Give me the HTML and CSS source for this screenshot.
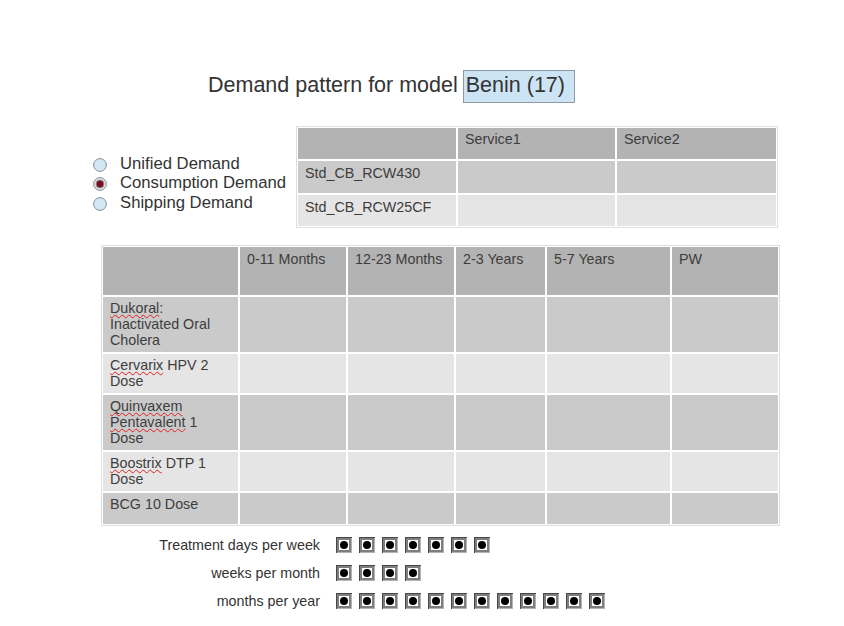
FILE: index.html
```html
<!DOCTYPE html>
<html>
<head>
<meta charset="utf-8">
<link rel="stylesheet" href="styles.css">
</head>
<body>
<svg class="defs" width="0" height="0">
  <defs>
    <symbol id="chk" viewBox="0 0 16 16">
      <rect x="0" y="0" width="16" height="16" fill="#474747"/>
      <rect x="1" y="1" width="15" height="15" fill="#b4b4b4"/>
      <rect x="1" y="1" width="14" height="14" fill="#7e7e7e"/>
      <rect x="3" y="3" width="10" height="10" fill="#ffffff"/>
      <circle cx="8" cy="8" r="4" fill="#000000"/>
    </symbol>
  </defs>
</svg>
<div class="page">
  <div class="title-row">
    <span class="title">Demand pattern for model</span>
    <span class="model-box">Benin (17)</span>
  </div>

  <div class="mid">
    <div class="radios">
      <label class="radio">
        <svg class="radio-ico" width="14" height="14" viewBox="0 0 14 14"><circle cx="7" cy="7" r="6.4" fill="#d4e7f5" stroke="#8c8c8c" stroke-width="1"/></svg>
        <span>Unified Demand</span>
      </label>
      <label class="radio">
        <svg class="radio-ico" width="14" height="14" viewBox="0 0 14 14"><circle cx="7" cy="7" r="6.4" fill="#dbe4ea" stroke="#8c8c8c" stroke-width="1"/><circle cx="7" cy="7" r="3.9" fill="#7d0b20" stroke="#8a8a8a" stroke-width="1"/></svg>
        <span>Consumption Demand</span>
      </label>
      <label class="radio">
        <svg class="radio-ico" width="14" height="14" viewBox="0 0 14 14"><circle cx="7" cy="7" r="6.4" fill="#d4e7f5" stroke="#8c8c8c" stroke-width="1"/></svg>
        <span>Shipping Demand</span>
      </label>
    </div>

    <table class="grid services">
      <tr class="head">
        <th class="c158"></th>
        <th class="c157">Service1</th>
        <th class="c159">Service2</th>
      </tr>
      <tr class="odd r32">
        <td>Std_CB_RCW430</td><td></td><td></td>
      </tr>
      <tr class="even r31">
        <td>Std_CB_RCW25CF</td><td></td><td></td>
      </tr>
    </table>
  </div>

  <table class="grid vaccines">
    <tr class="head h48">
      <th class="w135"></th>
      <th class="w106">0-11 Months</th>
      <th class="w106">12-23 Months</th>
      <th class="w89">2-3 Years</th>
      <th class="w123">5-7 Years</th>
      <th class="w106">PW</th>
    </tr>
    <tr class="odd">
      <td><span class="sp">Dukoral</span>: Inactivated Oral Cholera</td><td></td><td></td><td></td><td></td><td></td>
    </tr>
    <tr class="even">
      <td><span class="sp">Cervarix</span> HPV 2 Dose</td><td></td><td></td><td></td><td></td><td></td>
    </tr>
    <tr class="odd">
      <td><span class="sp">Quinvaxem</span> <span class="sp">Pentavalent</span> 1 Dose</td><td></td><td></td><td></td><td></td><td></td>
    </tr>
    <tr class="even">
      <td><span class="sp">Boostrix</span> DTP 1 Dose</td><td></td><td></td><td></td><td></td><td></td>
    </tr>
    <tr class="odd min31">
      <td>BCG 10 Dose</td><td></td><td></td><td></td><td></td><td></td>
    </tr>
  </table>

  <div class="schedule">
    <div class="sched-label">Treatment days per week</div>
    <div class="boxes">
      <svg class="chk"><use href="#chk"/></svg><svg class="chk"><use href="#chk"/></svg><svg class="chk"><use href="#chk"/></svg><svg class="chk"><use href="#chk"/></svg><svg class="chk"><use href="#chk"/></svg><svg class="chk"><use href="#chk"/></svg><svg class="chk"><use href="#chk"/></svg>
    </div>
    <div class="sched-label">weeks per month</div>
    <div class="boxes">
      <svg class="chk"><use href="#chk"/></svg><svg class="chk"><use href="#chk"/></svg><svg class="chk"><use href="#chk"/></svg><svg class="chk"><use href="#chk"/></svg>
    </div>
    <div class="sched-label">months per year</div>
    <div class="boxes">
      <svg class="chk"><use href="#chk"/></svg><svg class="chk"><use href="#chk"/></svg><svg class="chk"><use href="#chk"/></svg><svg class="chk"><use href="#chk"/></svg><svg class="chk"><use href="#chk"/></svg><svg class="chk"><use href="#chk"/></svg><svg class="chk"><use href="#chk"/></svg><svg class="chk"><use href="#chk"/></svg><svg class="chk"><use href="#chk"/></svg><svg class="chk"><use href="#chk"/></svg><svg class="chk"><use href="#chk"/></svg><svg class="chk"><use href="#chk"/></svg>
    </div>
  </div>
</div>
</body>
</html>
```

FILE: styles.css
```css
html, body {
  margin: 0;
  padding: 0;
  background: #ffffff;
}

body {
  font-family: "Liberation Sans", Arial, sans-serif;
  color: #3a3a3a;
}

.defs {
  position: absolute;
  width: 0;
  height: 0;
  overflow: hidden;
}

.page {
  padding-top: 70px;
  width: 844px;
}

.title-row {
  display: flex;
  align-items: baseline;
  gap: 5px;
  margin-left: 208px;
  font-size: 21.5px;
  color: #333333;
}

.title {
  line-height: 28px;
}

.model-box {
  box-sizing: border-box;
  width: 112px;
  height: 33px;
  padding: 0 2px 3px;
  line-height: 28px;
  background: #cde4f5;
  border: 1px solid #8d9aa5;
}

.mid {
  display: flex;
  align-items: flex-start;
  margin-top: 23px;
}

.radios {
  width: 203px;
  margin-left: 93px;
  padding-top: 28px;
  display: flex;
  flex-direction: column;
}

.radio {
  display: flex;
  align-items: center;
  height: 19.5px;
  font-size: 16.7px;
  color: #333333;
}

.radio-ico {
  flex: none;
  margin-right: 13px;
  margin-top: 2px;
}

.grid {
  border-collapse: separate;
  border-spacing: 2px;
  table-layout: fixed;
  box-shadow: inset 0 0 0 1px #dedede;
  font-size: 14.3px;
  color: #3d3d3d;
}

.grid th,
.grid td {
  text-align: left;
  font-weight: normal;
  vertical-align: top;
  padding: 3px 7px 4px;
  line-height: 16px;
}

.head th {
  background: #b3b3b3;
}

.odd td {
  background: #cacaca;
}

.even td {
  background: #e5e5e5;
}

.services {
  width: 482px;
}

.services .head {
  height: 31px;
}

.services .head th {
  padding-top: 3px;
}

.services td {
  padding-top: 4px;
}

.r32 {
  height: 32px;
}

.r31 {
  height: 31px;
}

.c158 { width: 144px; }
.c157 { width: 143px; }
.c159 { width: 145px; }

.vaccines {
  width: 679px;
  margin-left: 101px;
  margin-top: 17px;
}

.h48 {
  height: 48px;
}

.vaccines .head th {
  padding-top: 4px;
}

.vaccines td {
  padding-top: 3px;
}

.min31 {
  height: 31px;
}

.w135 { width: 121px; }
.w106 { width: 92px; }
.w89 { width: 75px; }
.w123 { width: 109px; }

.sp {
  text-decoration: underline wavy #e02020;
  text-decoration-thickness: 1px;
  text-underline-offset: 1px;
  text-decoration-skip-ink: none;
}

.schedule {
  display: grid;
  grid-template-columns: 320px auto;
  grid-auto-rows: 28px;
  column-gap: 16px;
  margin-top: 5px;
  font-size: 14.3px;
  color: #333333;
}

.sched-label {
  text-align: right;
  align-self: center;
}

.boxes {
  display: flex;
  align-items: center;
  gap: 7px;
}

.chk {
  width: 16px;
  height: 16px;
  flex: none;
}
```
